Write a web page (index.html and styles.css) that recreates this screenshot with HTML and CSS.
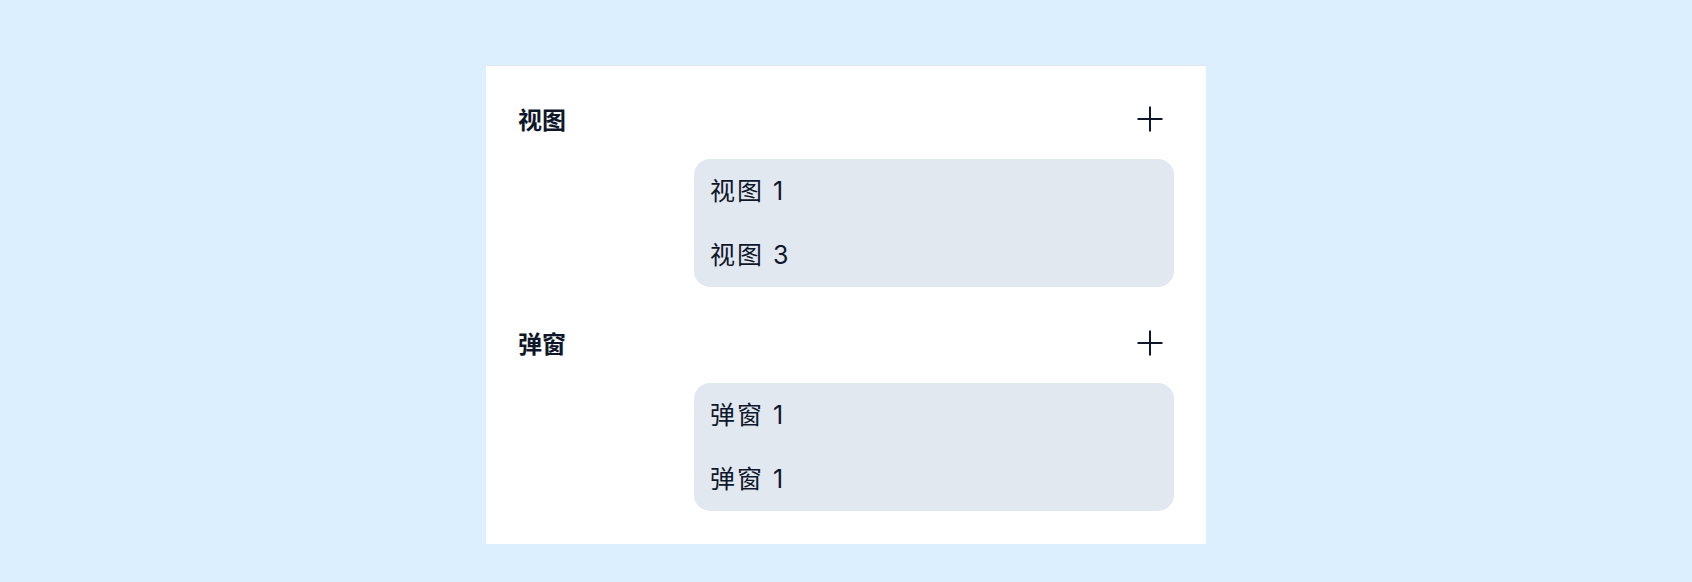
FILE: index.html
```html
<!DOCTYPE html>
<html lang="zh-CN">
<head>
<meta charset="utf-8">
<title>视图与弹窗</title>
<link rel="stylesheet" href="styles.css">
</head>
<body>
<div class="panel">
  <section class="section">
    <div class="section-head">
      <h2 class="section-title">视图</h2>
      <button class="add-btn" type="button" aria-label="添加视图">
        <svg width="26" height="26" viewBox="0 0 26 26"><path d="M13 0.5V25.5M0.5 13H25.5" stroke="#0f172a" stroke-width="2" fill="none"/></svg>
      </button>
    </div>
    <ul class="item-list">
      <li class="item">视图 1</li>
      <li class="item">视图 3</li>
    </ul>
  </section>
  <section class="section">
    <div class="section-head">
      <h2 class="section-title">弹窗</h2>
      <button class="add-btn" type="button" aria-label="添加弹窗">
        <svg width="26" height="26" viewBox="0 0 26 26"><path d="M13 0.5V25.5M0.5 13H25.5" stroke="#0f172a" stroke-width="2" fill="none"/></svg>
      </button>
    </div>
    <ul class="item-list">
      <li class="item">弹窗 1</li>
      <li class="item">弹窗 1</li>
    </ul>
  </section>
</div>
</body>
</html>
```

FILE: styles.css
```css
* { box-sizing: border-box; }
html, body { margin: 0; padding: 0; }
body {
  background: #dbeffe;
  font-family: "Noto Sans CJK SC", "Noto Sans", sans-serif;
  color: #0f172a;
  padding-top: 65px;
}
.panel {
  width: 720px;
  margin: 0 auto;
  background: #ffffff;
  border-top: 1px solid #e2e6ec;
  padding: 33px 32px 33px;
  display: flex;
  flex-direction: column;
  gap: 36px;
}
.section {
  display: flex;
  flex-direction: column;
  gap: 20px;
}
.section-head {
  height: 40px;
  display: flex;
  align-items: center;
  justify-content: space-between;
}
.section-title {
  margin: 0;
  font-size: 24px;
  font-weight: 700;
  line-height: 40px;
  color: #0f172a;
}
.add-btn {
  width: 48px;
  height: 40px;
  padding: 0;
  border: 0;
  background: transparent;
  display: flex;
  align-items: center;
  justify-content: center;
  cursor: pointer;
}
.add-btn svg { display: block; }
.item-list {
  list-style: none;
  margin: 0 0 0 176px;
  padding: 0 16px;
  background: #e2e8f0;
  border-radius: 16px;
}
.item {
  height: 64px;
  line-height: 64px;
  font-family: Inter, "Noto Sans CJK SC", sans-serif;
  font-size: 25px;
  font-weight: 400;
  letter-spacing: 2px;
  color: #0f172a;
}
```
